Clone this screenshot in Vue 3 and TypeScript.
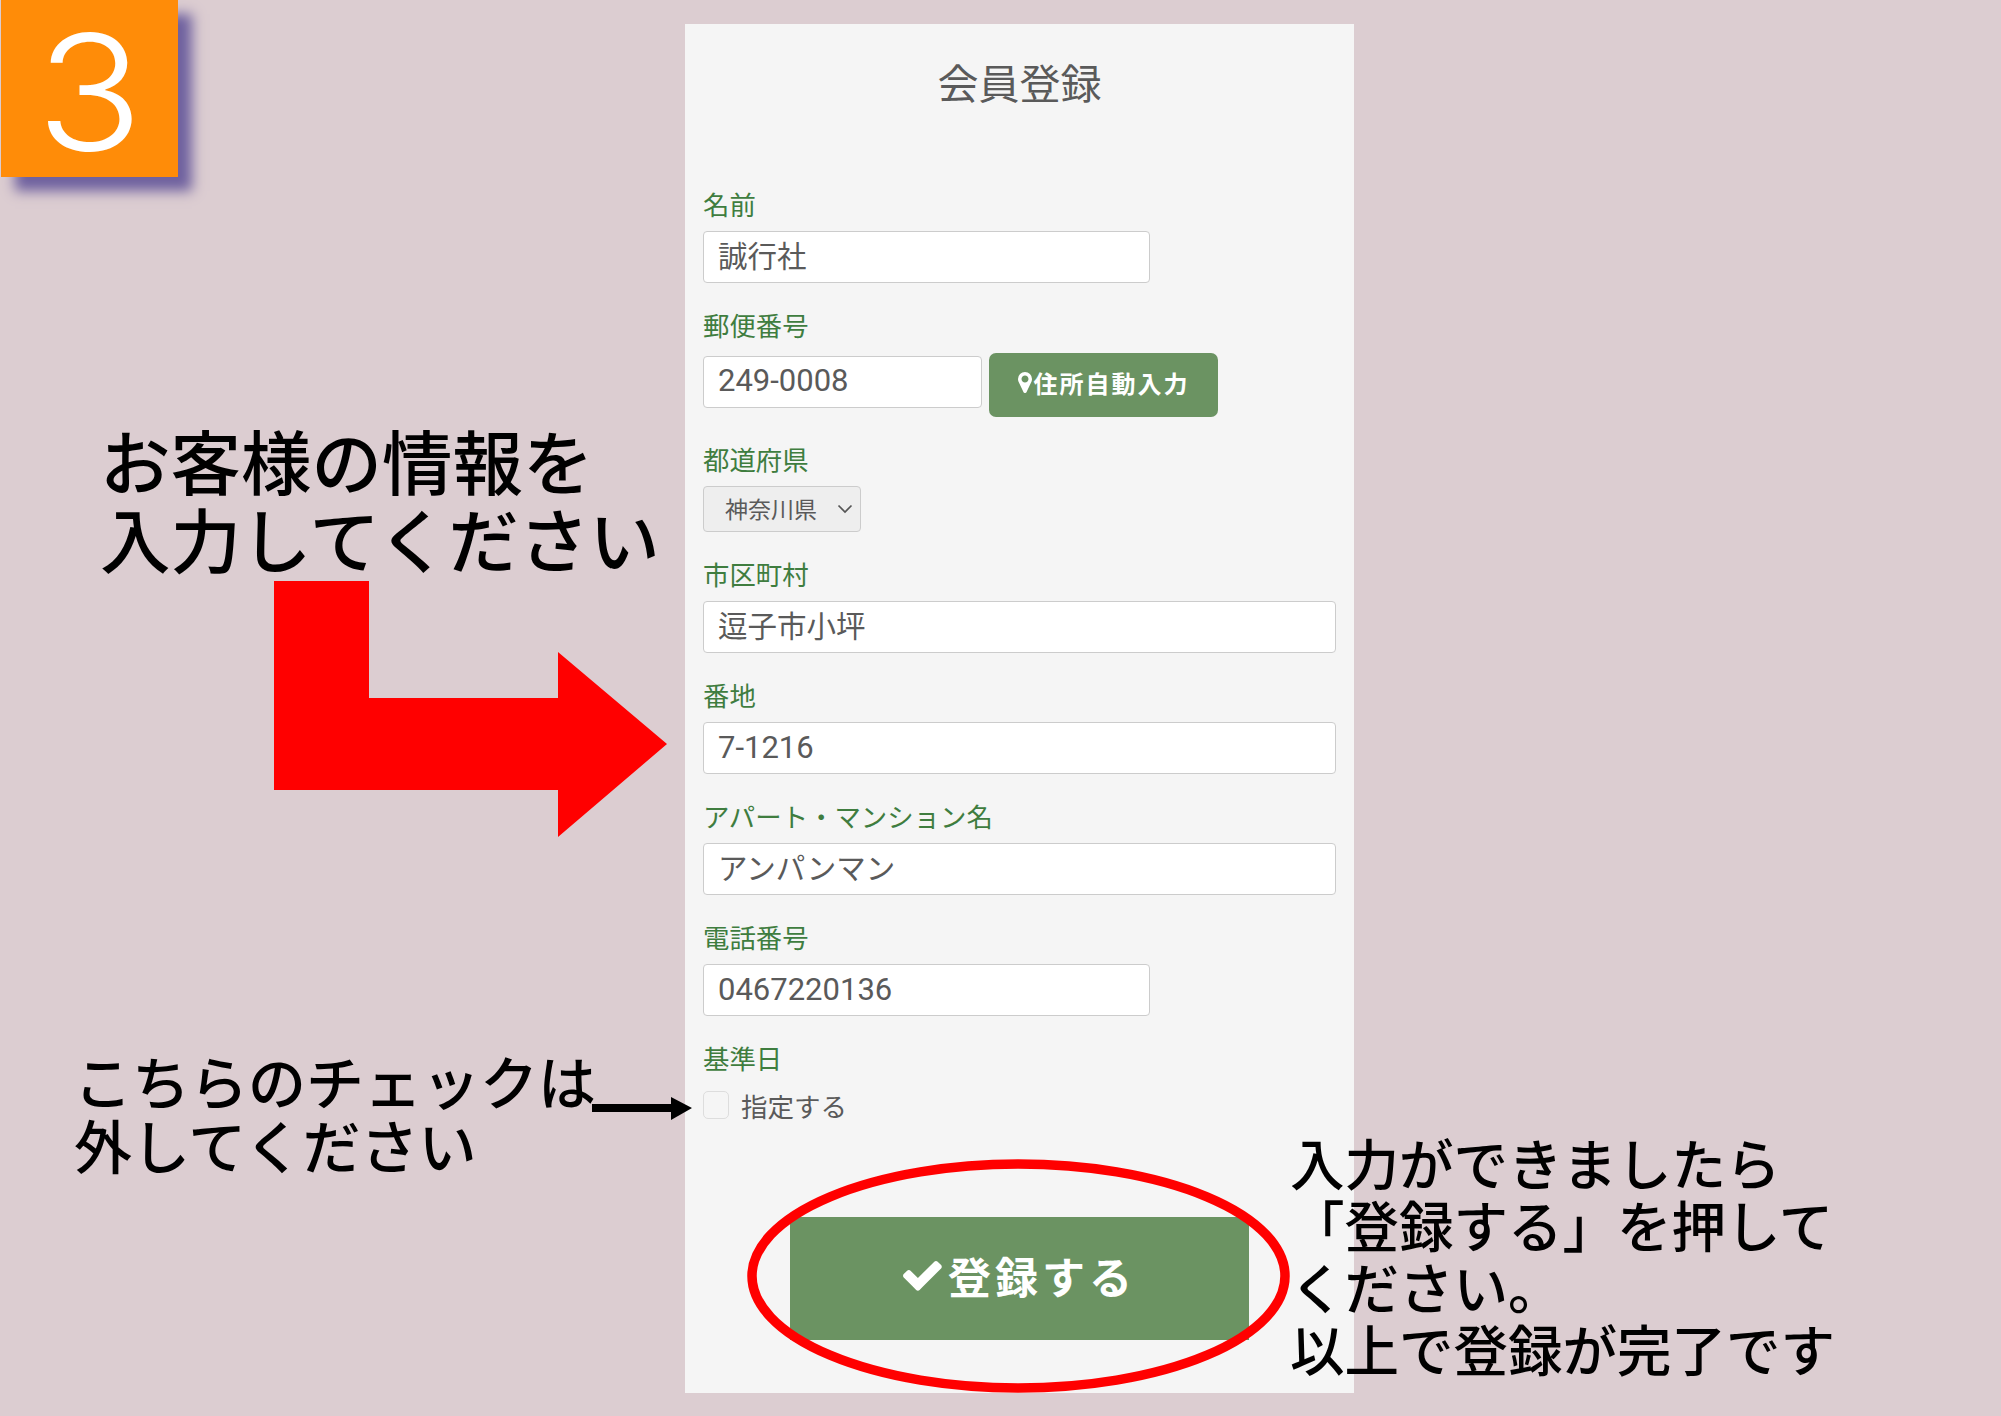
<script setup lang="ts">
const title: string = '会員登録'
</script>

<template>
  <div class="page">
    <div class="badge"><span class="badge-num">3</span></div>

    <main class="card">
      <h1 class="title">{{ title }}</h1>

      <div class="field">
        <div class="label">名前</div>
        <div class="input half">誠行社</div>
      </div>

      <div class="field">
        <div class="label">郵便番号</div>
        <div class="zip-row">
          <div class="input zip num">249-0008</div>
          <button class="zip-btn" type="button">
            <svg class="pin" viewBox="384 128 1024 1536"><path fill="#fff" d="M1152 640q0-106-75-181t-181-75-181 75-75 181 75 181 181 75 181-75 75-181zm256 0q0 109-33 179l-364 774q-16 33-47.5 52t-67.500 19-67.500-19-46.500-52l-365-774q-33-70-33-179 0-212 150-362t362-150 362 150 150 362z" /></svg>
            <span>住所自動入力</span>
          </button>
        </div>
      </div>

      <div class="field">
        <div class="label">都道府県</div>
        <div class="select">
          <span>神奈川県</span>
          <svg class="chev" viewBox="0 0 16 10"><path d="M1.500 1.500 8 8l6.500-6.500" fill="none" stroke="#555" stroke-width="1.700" /></svg>
        </div>
      </div>

      <div class="field">
        <div class="label">市区町村</div>
        <div class="input">逗子市小坪</div>
      </div>

      <div class="field">
        <div class="label">番地</div>
        <div class="input num">7-1216</div>
      </div>

      <div class="field">
        <div class="label">アパート・マンション名</div>
        <div class="input">アンパンマン</div>
      </div>

      <div class="field">
        <div class="label">電話番号</div>
        <div class="input half num">0467220136</div>
      </div>

      <div class="check-field">
        <div class="label">基準日</div>
        <div class="check-row">
          <span class="checkbox"></span>
          <span>指定する</span>
        </div>
      </div>

      <button class="submit" type="button">
        <svg class="tick" viewBox="128 256 1543 1280"><path fill="#fff" d="M1671 566q0 40-28 68l-724 724-136 136q-28 28-68 28t-68-28l-136-136-362-362q-28-28-28-68t28-68l136-136q28-28 68-28t68 28l294 295 656-657q28-28 68-28t68 28l136 136q28 28 28 68z" /></svg>
        <span>登録する</span>
      </button>
    </main>

    <div class="note note-top">お客様の情報を<br />入力してください</div>
    <div class="note note-check">こちらのチェックは<br />外してください</div>
    <div class="note note-done">入力ができましたら<br />「登録する」を押して<br />ください。<br />以上で登録が完了です</div>

    <svg class="overlay" viewBox="0 0 2001 1416">
      <polygon fill="#ff0000" points="274,581 369,581 369,698 558,698 558,652 667,744 558,837 558,790 274,790" />
      <polygon fill="#000000" points="592,1104 671,1104 671,1097 692,1108 671,1120 671,1112 592,1112" />
      <ellipse cx="1018.500" cy="1276" rx="266.500" ry="112" fill="none" stroke="#ff0000" stroke-width="9.500" />
    </svg>
  </div>
</template>

<style scoped>
.page {
  position: relative;
  width: 2001px;
  height: 1416px;
  overflow: hidden;
  background: #dccdd1;
  padding: 24px 0 0 685px;
  box-sizing: border-box;
  font-family: Roboto, "Noto Sans CJK JP", sans-serif;
}
.badge {
  position: absolute;
  left: 1px;
  top: 0;
  width: 177px;
  height: 177px;
  box-sizing: border-box;
  padding-top: 7px;
  background: #ff8c08;
  box-shadow: 14px 14px 12px #6f619f;
  color: #fff;
  font-family: Inter, sans-serif;
  font-weight: 300;
  font-size: 160px;
  line-height: 170px;
  text-align: center;
}
.badge-num {
  display: inline-block;
  transform: scaleX(1.1);
}
.card {
  width: 669px;
  height: 1369px;
  box-sizing: border-box;
  background: #f5f5f5;
  padding: 36px 18px 0;
}
.title {
  margin: 0 0 78px;
  font-size: 41px;
  font-weight: 400;
  line-height: 50px;
  color: #5a5a5a;
  text-align: center;
}
.field {
  margin-bottom: 26px;
}
.label {
  font-size: 26.400px;
  line-height: 36px;
  color: #3f7d3f;
  margin-bottom: 7px;
}
.input {
  height: 52px;
  box-sizing: border-box;
  background: #fff;
  border: 1.500px solid #ccc;
  border-radius: 4px;
  padding: 2px 14px 0;
  font-size: 29.500px;
  line-height: 46px;
  color: #5a5a5a;
}
.num {
  font-size: 31px;
}
.half {
  width: 447px;
}
.zip-row {
  display: flex;
  align-items: flex-start;
  gap: 7px;
  margin-top: 8px;
  margin-bottom: 26px;
}
.zip {
  width: 279px;
  margin-top: 3px;
  padding-top: 1px;
}
.zip-btn {
  width: 229px;
  height: 64px;
  border: 0;
  padding: 0 0 5px;
  border-radius: 7px;
  background: #6b9362;
  color: #fff;
  font-family: inherit;
  font-size: 24px;
  font-weight: 700;
  letter-spacing: 2px;
  display: flex;
  align-items: center;
  justify-content: center;
  gap: 2px;
}
.pin {
  width: 14px;
  height: 21px;
}
.select {
  width: 158px;
  height: 46px;
  box-sizing: border-box;
  background: #eeeeee;
  border: 1.500px solid #ccc;
  border-radius: 4px;
  padding: 0 7px 3px 21px;
  display: flex;
  align-items: center;
  justify-content: space-between;
  font-size: 23px;
  color: #5a5a5a;
}
.chev {
  width: 16px;
  height: 10px;
  margin-top: 3px;
}
.check-field {
  margin-bottom: 92px;
}
.check-row {
  height: 40px;
  margin-top: 7px;
  display: flex;
  align-items: center;
  gap: 12px;
  font-size: 26.500px;
  color: #5a5a5a;
}
.checkbox {
  width: 26px;
  height: 28px;
  box-sizing: border-box;
  border: 1.500px solid #ddd;
  border-radius: 5px;
  background: #f5f5f5;
}
.submit {
  display: flex;
  align-items: center;
  justify-content: center;
  gap: 6px;
  width: 459px;
  height: 123px;
  margin: 0 auto;
  border: 0;
  padding: 0 0 8px;
  background: #6b9362;
  color: #fff;
  font-family: inherit;
  font-size: 43px;
  font-weight: 700;
  letter-spacing: 4px;
}
.tick {
  width: 39px;
  height: 32px;
}
.note {
  position: absolute;
  color: #000;
  font-family: "Noto Sans CJK JP", sans-serif;
  font-weight: 500;
  white-space: nowrap;
}
.note-top {
  left: 100px;
  top: 420px;
  font-size: 70.500px;
  line-height: 78px;
}
.note-check {
  left: 74px;
  top: 1048px;
  font-size: 58px;
  line-height: 64px;
}
.note-done {
  left: 1290px;
  top: 1131px;
  font-size: 54.500px;
  line-height: 62px;
}
.overlay {
  position: absolute;
  left: 0;
  top: 0;
  width: 2001px;
  height: 1416px;
  pointer-events: none;
}
</style>
